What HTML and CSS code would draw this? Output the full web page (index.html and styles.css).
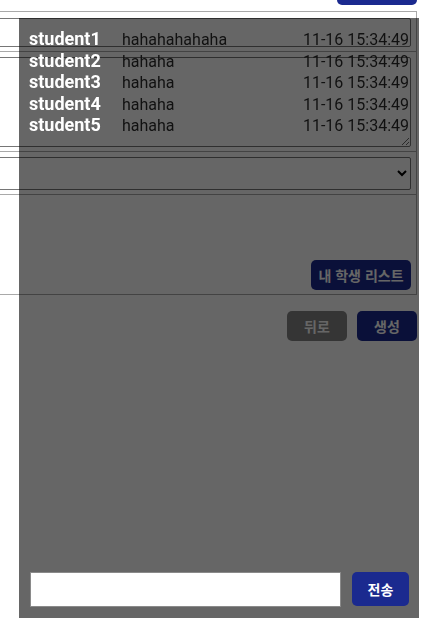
FILE: index.html
```html
<!DOCTYPE html>
<html lang="ko">
<head>
<meta charset="UTF-8">
<meta name="viewport" content="width=device-width, initial-scale=1.0">
<title>학생 생성</title>
<link rel="stylesheet" href="styles.css">
</head>
<body>
<div class="page">
    <div class="header">
        <button class="btn btn-blue top-btn"></button>
    </div>
    <div class="card">
        <div class="section">
            <input type="text" class="field">
        </div>
        <div class="section">
            <textarea class="field area" rows="4"></textarea>
        </div>
        <div class="section">
            <select class="field pick">
                <option></option>
            </select>
        </div>
        <div class="section last">
            <button class="btn btn-blue list-btn">내 학생 리스트</button>
        </div>
    </div>
    <div class="actions">
        <button class="btn btn-gray">뒤로</button>
        <button class="btn btn-blue">생성</button>
    </div>
</div>

<div class="chat">
    <div class="messages">
        <div class="msg"><span class="name">student1</span><span class="text">hahahahahaha</span><span class="time">11-16 15:34:49</span></div>
        <div class="msg"><span class="name">student2</span><span class="text">hahaha</span><span class="time">11-16 15:34:49</span></div>
        <div class="msg"><span class="name">student3</span><span class="text">hahaha</span><span class="time">11-16 15:34:49</span></div>
        <div class="msg"><span class="name">student4</span><span class="text">hahaha</span><span class="time">11-16 15:34:49</span></div>
        <div class="msg"><span class="name">student5</span><span class="text">hahaha</span><span class="time">11-16 15:34:49</span></div>
    </div>
    <div class="chat-input">
        <input type="text" class="chat-text">
        <button class="btn btn-blue send-btn">전송</button>
    </div>
</div>
</body>
</html>
```

FILE: styles.css
```css
body {
    margin: 0;
    font-family: Roboto, "Noto Sans CJK KR", sans-serif;
    background: #fff;
}

.page {
    margin-left: -10px;
    width: 427px;
}

.header {
    display: flex;
    justify-content: flex-end;
    height: 11px;
}

.btn {
    border: none;
    border-radius: 5px;
    color: #fff;
    font-family: "Noto Sans CJK KR", sans-serif;
    font-weight: bold;
    font-size: 14px;
    cursor: pointer;
    padding: 0;
}

.btn-blue {
    background-color: #1b2a8f;
}

.btn-gray {
    background-color: #858585;
}

.top-btn {
    width: 80px;
    height: 30px;
    margin-top: -25px;
}

.card {
    border: 1px solid #a9a9a9;
}

.section {
    padding: 5px 5px 4px 5px;
    border-bottom: 1px solid #a9a9a9;
}

.section:first-child {
    padding-top: 6px;
}

.section.last {
    border-bottom: none;
    height: 90px;
    display: flex;
    justify-content: flex-end;
    align-items: flex-end;
    padding-bottom: 4px;
}

.field {
    display: block;
    width: 100%;
    box-sizing: border-box;
    border: 1px solid #767676;
    border-radius: 2px;
    background: #fff;
    margin: 0;
}

input.field {
    height: 29px;
}

.area {
    height: 90px;
    resize: vertical;
}

.pick {
    height: 33px;
}

.list-btn {
    width: 100px;
    height: 30px;
}

.actions {
    display: flex;
    justify-content: flex-end;
    gap: 10px;
    margin-top: 16px;
}

.actions .btn {
    width: 60px;
    height: 30px;
}

/* chat overlay */
.chat {
    position: fixed;
    left: 19px;
    top: 18px;
    width: 400px;
    height: 600px;
    box-sizing: border-box;
    padding: 10px 10px 11px 10px;
    background-color: rgba(0, 0, 0, 0.6);
    display: flex;
    flex-direction: column;
}

.messages {
    flex: 1;
}

.msg {
    display: grid;
    grid-template-columns: 93px 1fr auto;
    align-items: baseline;
    font-size: 16px;
    height: 21.6px;
    line-height: 21.6px;
    color: #111;
}

.name {
    color: #fff;
    font-weight: bold;
    font-size: 18px;
}

.chat-input {
    display: flex;
    gap: 11px;
    padding-left: 1px;
}

.chat-text {
    flex: 1;
    height: 35px;
    box-sizing: border-box;
    border: 1px solid #8a8a8a;
    margin: 0;
}

.send-btn {
    width: 57px;
    height: 34px;
}
```
